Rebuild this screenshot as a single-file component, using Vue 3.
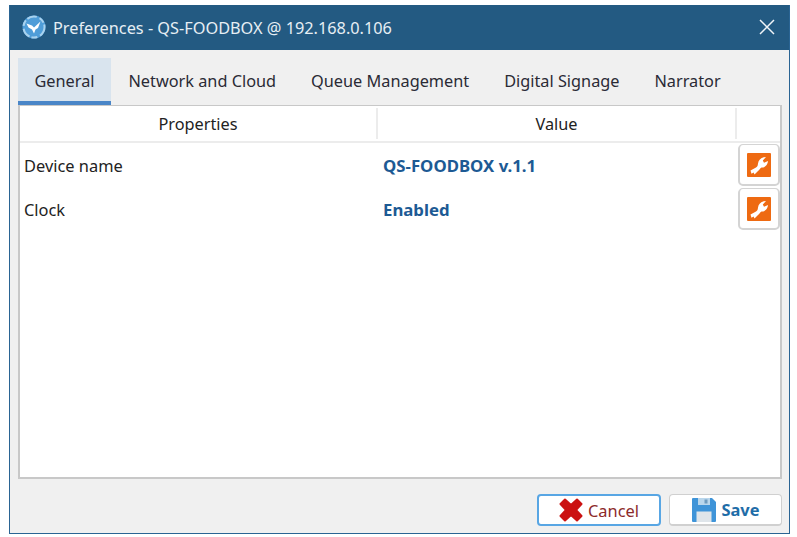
<script setup>
const tabs = ['General', 'Network and Cloud', 'Queue Management', 'Digital Signage', 'Narrator']
const rows = [
  { name: 'Device name', value: 'QS-FOODBOX v.1.1' },
  { name: 'Clock', value: 'Enabled' }
]
</script>

<template>
  <div class="page">
    <div class="window">
      <header class="titlebar">
        <svg class="logo" viewBox="0 0 24 24" width="24" height="24">
          <circle cx="12" cy="12" r="11.5" fill="#4f9dd8" />
          <circle cx="12" cy="12" r="10.5" fill="none" stroke="#a9d2ee" stroke-width="2" stroke-dasharray="10 3 6 2" />
          <path d="M4.5 8.5 L10 10.5 L12 12.5 L18.5 6.5 L16 13 L13.5 14.5 L12 18.5 L10 14.5 L6.5 12.5 Z" fill="#ffffff" />
        </svg>
        <span class="title">Preferences - QS-FOODBOX @ 192.168.0.106</span>
        <svg class="close" viewBox="0 0 16 16" width="16" height="16">
          <path d="M1 1 L15 15 M15 1 L1 15" stroke="#f0f4f8" stroke-width="1.5" fill="none" />
        </svg>
      </header>
      <div class="body">
        <nav class="tabs">
          <div v-for="(t, i) in tabs" :key="t" class="tab" :class="{ active: i === 0 }">{{ t }}</div>
        </nav>
        <section class="panel">
          <div class="thead">
            <div class="th c1">Properties</div>
            <div class="th c2">Value</div>
            <div class="th c3"></div>
          </div>
          <div v-for="r in rows" :key="r.name" class="row">
            <div class="c1 name">{{ r.name }}</div>
            <div class="c2 value">{{ r.value }}</div>
            <div class="c3 action">
              <button class="edit">
                <svg viewBox="0 0 24 24" width="24" height="24">
                  <rect width="24" height="24" rx="1" fill="#ee6a12" />
                  <path d="M3.5 17.5 L9 14.5 C10.5 13.5 10.8 12.5 11 10.5 C11.5 6.5 14.5 4 19 4 L15.8 7.5 L17 9.8 L21 8 C20.5 12.5 17.5 14.8 14.5 14.6 C13 15.5 12 17.5 10.5 18.5 L7.5 21.5 L6.6 19.4 L4.5 20.8 Z" fill="#ffffff" />
                </svg>
              </button>
            </div>
          </div>
        </section>
        <footer class="actions">
          <button class="btn cancel">
            <svg viewBox="0 0 24 24" width="24" height="24">
              <path d="M6 1.5 L12 7 L18 1.5 L22.5 6 L17 12 L22.5 18 L18 22.5 L12 17 L6 22.5 L1.5 18 L7 12 L1.5 6 Z" fill="#cb1212" stroke="#cb1212" stroke-width="2" stroke-linejoin="round" />
            </svg>
            <span>Cancel</span>
          </button>
          <button class="btn save">
            <svg viewBox="0 0 24 24" width="24" height="24">
              <path d="M0 1 Q0 0 1 0 H20 L24 4 V23 Q24 24 23 24 H1 Q0 24 0 23 Z" fill="#3f94d8" />
              <rect x="6" y="0" width="12" height="7" fill="#b9d6ec" />
              <rect x="12.5" y="1.5" width="3" height="4" fill="#6f9cc0" />
              <rect x="4.5" y="13.5" width="15" height="10.5" fill="#dfe5ea" />
            </svg>
            <span>Save</span>
          </button>
        </footer>
      </div>
    </div>
  </div>
</template>

<style>
html, body { margin: 0; background: #ffffff; }
</style>

<style scoped>
.page {
  width: 797px;
  height: 537px;
  padding: 5px 7px 3px 9px;
  box-sizing: border-box;
  font-family: "Noto Sans", "Open Sans", sans-serif;
  color: #222;
}
.window {
  height: 100%;
  display: flex;
  flex-direction: column;
  border: 1px solid #2a6493;
  border-top: 0;
  box-sizing: border-box;
}
.titlebar {
  height: 45px;
  flex: none;
  background: #235a82;
  display: flex;
  align-items: center;
  padding: 0 14px 2px 12px;
  box-sizing: border-box;
  color: #e6eef4;
}
.logo { flex: none; margin-right: 7px; }
.title { font-size: 16.3px; flex: 1; padding-top: 2px; }
.close { flex: none; }
.body {
  flex: 1;
  min-height: 0;
  background: #f0f0f0;
  display: flex;
  flex-direction: column;
  padding: 8px 7px 0 8px;
}
.tabs { display: flex; height: 47px; flex: none; }
.tab {
  font-size: 16.3px;
  padding: 3px 17.5px 0;
  display: flex;
  align-items: center;
  box-sizing: border-box;
  border-bottom: 4px solid transparent;
  color: #2a2a35;
}
.tab.active {
  background: #d9e4ee;
  border-bottom-color: #4a86c8;
  width: 93px;
  padding: 3px 0 0;
  justify-content: center;
}
.panel {
  height: 374px;
  flex: none;
  background: #ffffff;
  border: 1px solid #c8c8c8;
  border-width: 1px 2px 2px 2px;
  box-sizing: border-box;
  display: flex;
  flex-direction: column;
}
.thead {
  display: flex;
  height: 37px;
  flex: none;
  border-bottom: 2px solid #ececec;
  padding-top: 2px;
  box-sizing: border-box;
}
.th {
  display: flex;
  align-items: center;
  justify-content: center;
  font-size: 16.3px;
  border-right: 2px solid #ececec;
  margin-bottom: 2px;
  padding-top: 1px;
}
.th.c3 { border-right: 0; }
.c1 { width: 358px; flex: none; box-sizing: border-box; }
.c2 { width: 359px; flex: none; box-sizing: border-box; }
.c3 { flex: 1; }
.row { display: flex; height: 44px; align-items: center; flex: none; }
.name { padding-left: 4px; font-size: 16.4px; }
.value { padding-left: 5px; font-size: 16.8px; font-weight: 700; color: #1d5a94; }
.action { display: flex; justify-content: flex-start; padding-left: 1px; }
.edit {
  width: 42px;
  height: 42px;
  background: #fff;
  border: 1px solid #d4d4d4;
  border-width: 1px 2px 2px 2px;
  border-radius: 5px;
  padding: 0;
  display: flex;
  align-items: center;
  justify-content: center;
  box-sizing: border-box;
}
.actions {
  flex: 1;
  display: flex;
  justify-content: flex-end;
  align-items: flex-start;
  gap: 8px;
  padding-top: 15px;
}
.btn {
  height: 32px;
  background: #fff;
  border-radius: 4px;
  box-sizing: border-box;
  display: flex;
  align-items: center;
  justify-content: center;
  padding: 0;
  font-family: inherit;
  font-size: 16.4px;
}
.cancel { width: 124px; border: 2px solid #58a6e4; color: #8c2a2a; gap: 5px; }
.save { width: 113px; border: 1px solid #d0d0d0; border-bottom-width: 2px; color: #1f6da8; font-weight: 700; gap: 6px; }
</style>
